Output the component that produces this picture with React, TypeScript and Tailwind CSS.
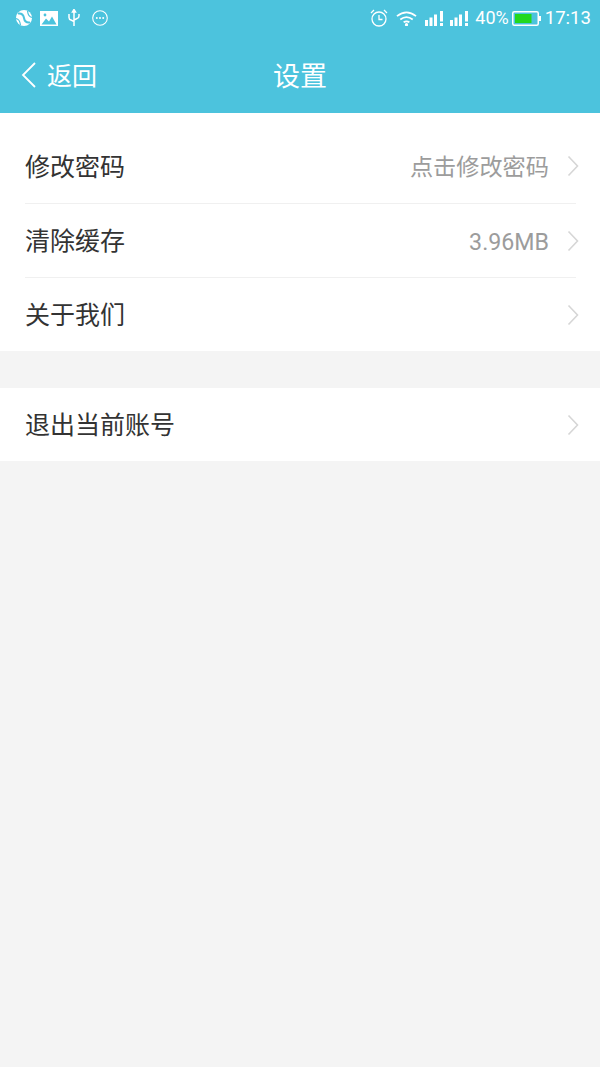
const font = { fontFamily: '"Noto Sans CJK SC", "Noto Sans", sans-serif' };

function Chevron() {
  return (
    <svg width="12" height="22" viewBox="0 0 12 22" fill="none" stroke="#d6d6d6" strokeWidth="1.600" className="-mr-[3px] ml-[18px] shrink-0">
      <path d="M1.500 1.500 L10.500 11 L1.500 20.500" />
    </svg>
  );
}

function Row({ label, value, className }: { label: string; value?: string; className: string }) {
  return (
    <div className={`flex items-center ${className}`}>
      <span className="flex-1 pb-[2px] text-[25px] leading-none text-[#333333]">{label}</span>
      {value && (
        <span
          className="pt-[4px] text-[23.2px] leading-none text-[#9c9c9c]"
          style={{ fontFamily: 'Roboto, "Noto Sans CJK SC", sans-serif' }}
        >
          {value}
        </span>
      )}
      <Chevron />
    </div>
  );
}

function Signal({ className }: { className?: string }) {
  return (
    <svg width="20" height="15" viewBox="0 0 20 15" fill="white" className={className}>
      <rect x="0" y="9" width="3" height="6" />
      <rect x="4.500" y="6.500" width="3" height="8.500" />
      <rect x="9" y="3.500" width="3" height="11.500" />
      <rect x="15" y="0" width="3" height="10.500" />
      <rect x="15" y="12" width="3" height="3" />
    </svg>
  );
}

function StatusBar() {
  return (
    <div className="flex h-[36px] items-center justify-between pl-[16px] pr-[9px] text-white">
      <div className="flex items-center">
        <svg width="16" height="16" viewBox="0 0 16 16">
          <circle cx="8" cy="8" r="8" fill="white" />
          <path d="M2 3.500 C5.500 3 7.500 5 8 8 C8.500 11 10.500 13 14 12.500" fill="none" stroke="#4cc3dd" strokeWidth="2" />
          <path d="M0 8.500 C2.500 9 4 10.500 4.500 15" fill="none" stroke="#4cc3dd" strokeWidth="1.200" />
          <path d="M16 7.500 C13.500 7 12 5.500 11.500 1" fill="none" stroke="#4cc3dd" strokeWidth="1.200" />
        </svg>
        <svg width="18" height="15" viewBox="0 0 18 15" className="ml-[8px]">
          <rect width="18" height="15" fill="white" />
          <path d="M1.500 13.500 6 7.500l3 3 3-5 4.500 8Z" fill="#4cc3dd" />
          <circle cx="5" cy="4" r="1.400" fill="#4cc3dd" />
        </svg>
        <svg width="14" height="18" viewBox="0 0 14 18" fill="none" stroke="white" strokeWidth="1.500" className="ml-[9px]">
          <path d="M7 2v15M2 5v3.500q0 2 2 2.500l3 1.500M12 5v2q0 2-2 2.500L7 11" />
          <path d="M7 0.500 5.500 3h3Z" fill="white" />
        </svg>
        <svg width="16" height="16" viewBox="0 0 16 16" fill="white" className="ml-[11px]">
          <circle cx="8" cy="8" r="7.300" fill="none" stroke="white" strokeWidth="1.100" />
          <circle cx="4.800" cy="8" r="1" />
          <circle cx="8" cy="8" r="1" />
          <circle cx="11.200" cy="8" r="1" />
        </svg>
      </div>
      <div className="flex items-center">
        <svg width="18" height="18" viewBox="0 0 18 18" fill="none" stroke="white" strokeWidth="1.300">
          <circle cx="9" cy="10" r="7" />
          <path d="M9 6v4.500h3.500M1 4l3-3M17 4l-3-3" />
        </svg>
        <svg width="21" height="15" viewBox="0 0 22 15" fill="none" stroke="white" strokeWidth="1.800" className="ml-[8px]">
          <path d="M1 5q10-8 20 0M4.500 8.500q6.500-5 13 0M8 11.500q3-2 6 0" />
          <circle cx="11" cy="14" r="0.800" fill="white" />
        </svg>
        <Signal className="ml-[8px]" />
        <Signal className="ml-[5px]" />
        <span className="ml-[5px] text-[18px] leading-none" style={{ fontFamily: "Roboto, sans-serif" }}>40%</span>
        <svg width="29" height="15" viewBox="0 0 29 15" className="ml-[3px]">
          <rect x="0.750" y="0.750" width="25.500" height="13.500" rx="1.500" fill="none" stroke="white" strokeWidth="1.500" />
          <rect x="3" y="3" width="16.500" height="9" fill="#22d81e" />
          <rect x="27" y="5" width="2" height="5" fill="white" />
        </svg>
        <span className="ml-[4px] text-[18.600px] leading-none" style={{ fontFamily: "Roboto, sans-serif" }}>17:13</span>
      </div>
    </div>
  );
}

export default function App() {
  return (
    <div className="flex h-[1067px] w-[600px] flex-col bg-[#f4f4f4]" style={font}>
      <div className="h-[113px] bg-[#4cc3dd]">
        <StatusBar />
        <div className="relative flex h-[77px] items-center justify-center text-white">
          <div className="absolute left-[21px] flex items-center">
            <svg width="16" height="28" viewBox="0 0 16 28" fill="none" stroke="white" strokeWidth="1.800">
              <path d="M14 2 L2 14 L14 26" />
            </svg>
            <span className="ml-[10px] text-[25px] leading-none">返回</span>
          </div>
          <span className="text-[27px] leading-none">设置</span>
        </div>
      </div>
      <div className="bg-white pl-[25px] pr-[24px] pt-[16px]">
        <Row label="修改密码" value="点击修改密码" className="h-[75px] border-b border-[#f0f0f0]" />
        <Row label="清除缓存" value="3.96MB" className="h-[74px] border-b border-[#f0f0f0]" />
        <Row label="关于我们" className="h-[73px]" />
      </div>
      <div className="mt-[37px] bg-white pl-[25px] pr-[24px]">
        <Row label="退出当前账号" className="h-[73px]" />
      </div>
    </div>
  );
}
